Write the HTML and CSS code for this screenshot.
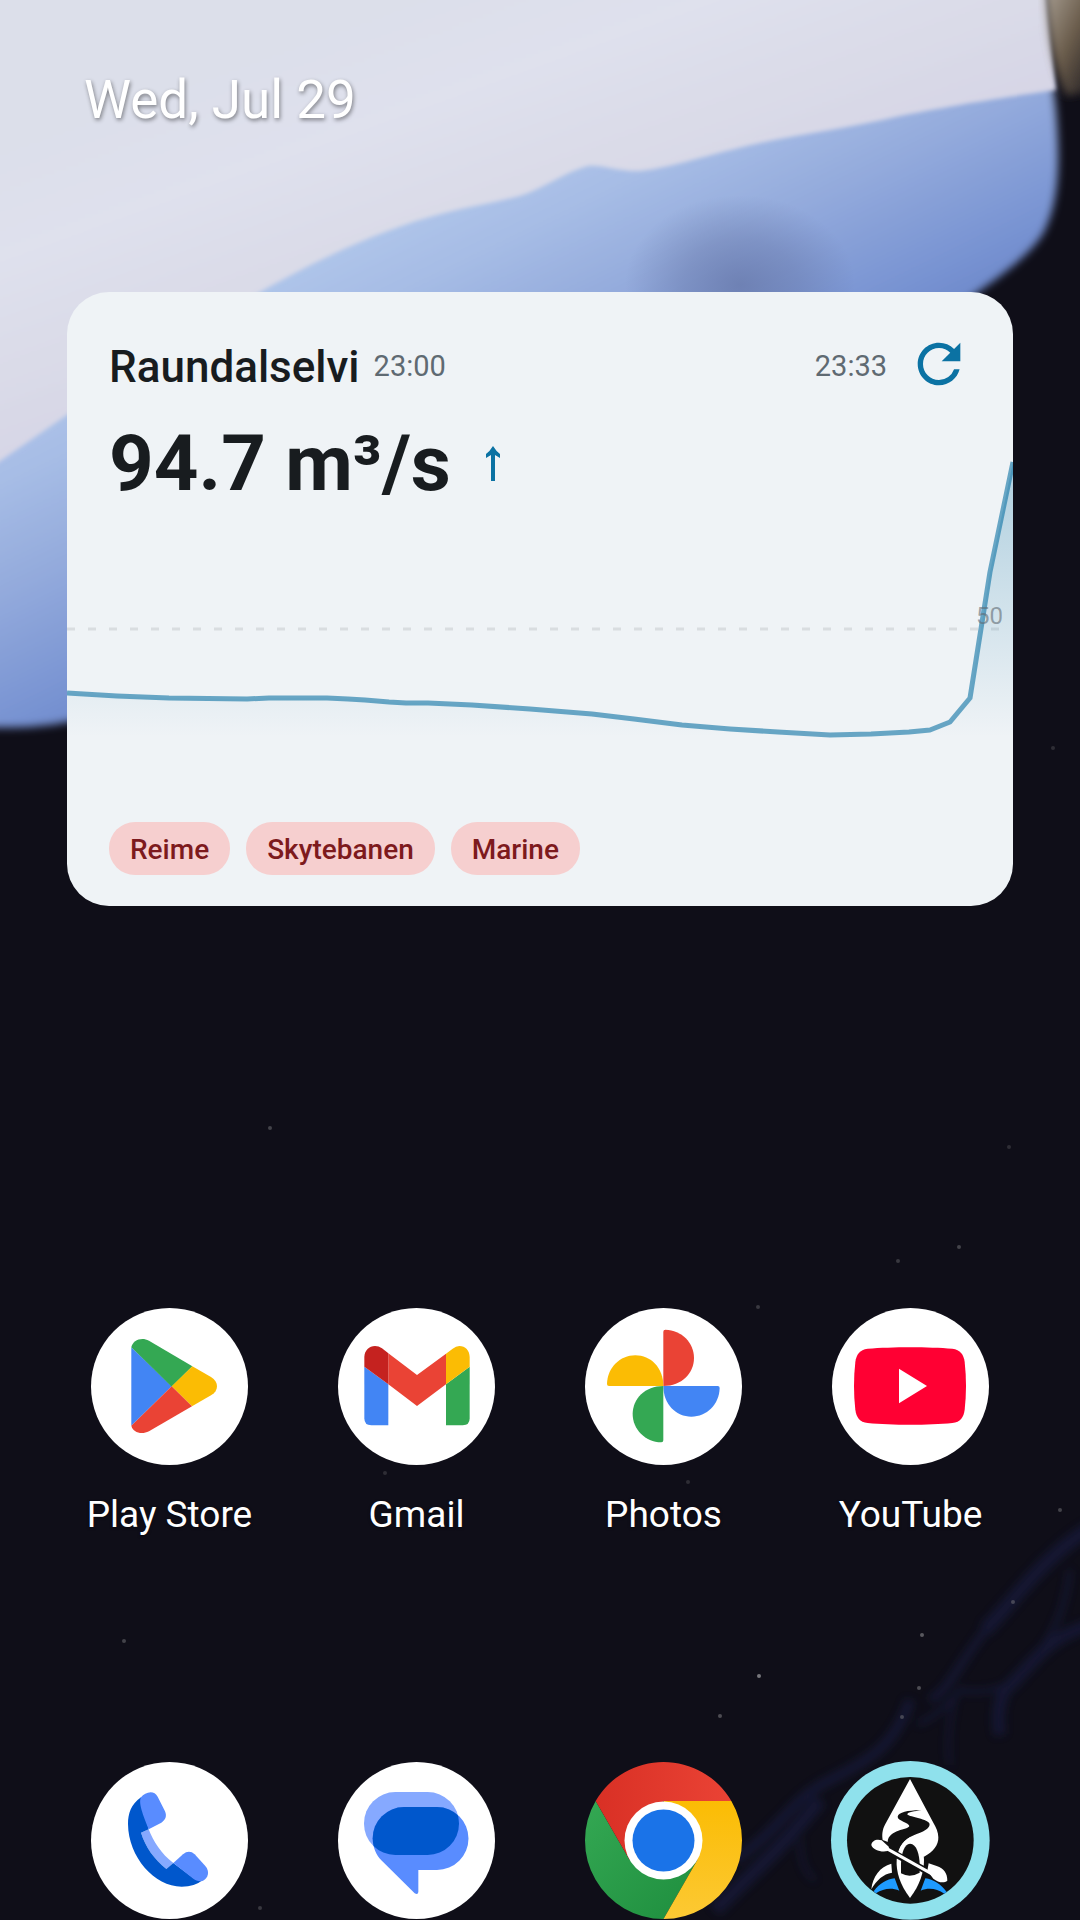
FILE: index.html
```
<!DOCTYPE html>
<html lang="en">
<head>
  <meta charset="UTF-8">
  <meta name="viewport" content="width=device-width, initial-scale=1.0">
  <title>Home screen</title>
  <link rel="stylesheet" href="styles.css">
</head>
<body>
  <!-- Wallpaper -->
  <svg class="wallpaper" viewBox="0 0 1080 1920" preserveAspectRatio="xMidYMid slice" aria-hidden="true">
    <defs>
      <linearGradient id="haze" gradientUnits="userSpaceOnUse" x1="400" y1="0" x2="520" y2="330">
        <stop offset="0" stop-color="#dcdfea"/>
        <stop offset="0.3" stop-color="#dfe1ed"/>
        <stop offset="0.6" stop-color="#dadbe8"/>
        <stop offset="1" stop-color="#d5d3e5"/>
      </linearGradient>
      <linearGradient id="wing" gradientUnits="userSpaceOnUse" x1="350" y1="230" x2="520" y2="580">
        <stop offset="0" stop-color="#b0c6ea"/>
        <stop offset="0.2" stop-color="#a6bce5"/>
        <stop offset="0.45" stop-color="#93aadc"/>
        <stop offset="0.75" stop-color="#7893d2"/>
        <stop offset="1" stop-color="#627dc2"/>
      </linearGradient>
      <radialGradient id="smudge">
        <stop offset="0" stop-color="#5d6c9c" stop-opacity="0.6"/>
        <stop offset="0.5" stop-color="#5d6c9c" stop-opacity="0.35"/>
        <stop offset="1" stop-color="#5d6c9c" stop-opacity="0"/>
      </radialGradient>
      <linearGradient id="sand" x1="0" y1="0" x2="1" y2="1">
        <stop offset="0" stop-color="#b0a79c"/>
        <stop offset="0.5" stop-color="#6a5c4b"/>
        <stop offset="1" stop-color="#14121a"/>
      </linearGradient>
      <filter id="soft" x="-10%" y="-10%" width="120%" height="120%"><feGaussianBlur stdDeviation="4"/></filter>
      <filter id="edge" x="-10%" y="-10%" width="120%" height="120%"><feGaussianBlur stdDeviation="2"/></filter>
    </defs>
    <rect width="1080" height="1920" fill="#0f0e18"/>
    <path filter="url(#soft)" fill="url(#wing)" d="M-20 -20H1046C1044 30 1052 70 1056 110C1060 160 1060 200 1044 232C1030 256 1000 276 970 298C700 500 300 700 67 722C40 728 10 728 -20 727Z"/>
    <path filter="url(#edge)" fill="url(#haze)" d="M-20 -20H1044L1056 90C1000 98 960 104 900 116C850 128 800 134 760 143C710 154 670 168 640 171C620 172 600 164 588 166C565 172 545 188 520 196C490 204 460 208 430 217C370 234 310 264 262 291L67 415L-20 475Z"/>
    <ellipse cx="740" cy="285" rx="115" ry="90" fill="url(#smudge)"/>
    <path filter="url(#soft)" fill="url(#sand)" d="M1044 -20H1100V90L1066 96Q1048 60 1044 -20Z"/>
    <!-- nebula -->
    <g filter="url(#soft)" fill="none" stroke="#1a2252" opacity="0.45">
      <path stroke-width="14" d="M1090 1528C1040 1560 1015 1600 985 1630"/>
      <path stroke-width="8" d="M990 1625C960 1660 950 1690 930 1700"/>
      <path stroke-width="12" d="M1090 1625C1040 1640 1030 1670 1005 1690Q995 1710 1000 1735"/>
      <path stroke-width="5" d="M1010 1684Q985 1695 960 1690Q940 1715 918 1724"/>
      <path stroke-width="5" d="M1070 1570Q1064 1620 1040 1650"/>
      <path stroke-width="10" d="M910 1700C895 1745 870 1760 830 1780S780 1830 735 1860"/>
      <path stroke-width="14" d="M820 1800C780 1850 755 1870 715 1910"/>
      <path stroke-width="4" d="M955 1695Q945 1740 950 1765M800 1840Q800 1870 815 1880"/>
    </g>
    <!-- stars -->
    <g fill="#77777c">
      <circle cx="270" cy="1128" r="2" opacity="0.5"/>
      <circle cx="759" cy="1676" r="2"/>
      <circle cx="720" cy="1716" r="2" opacity="0.6"/>
      <circle cx="922" cy="1635" r="2" opacity="0.7"/>
      <circle cx="919" cy="1688" r="2" opacity="0.6"/>
      <circle cx="902" cy="1717" r="2" opacity="0.5"/>
      <circle cx="1013" cy="1602" r="2" opacity="0.5"/>
      <circle cx="1060" cy="1510" r="2" opacity="0.5"/>
      <circle cx="959" cy="1247" r="2" opacity="0.5"/>
      <circle cx="898" cy="1261" r="2" opacity="0.4"/>
      <circle cx="758" cy="1307" r="2" opacity="0.4"/>
      <circle cx="124" cy="1641" r="2" opacity="0.5"/>
      <circle cx="385" cy="1473" r="2" opacity="0.3"/>
      <circle cx="688" cy="1482" r="2" opacity="0.3"/>
      <circle cx="260" cy="1908" r="2" opacity="0.4"/>
      <circle cx="1053" cy="748" r="2" opacity="0.3"/>
      <circle cx="1009" cy="1147" r="2" opacity="0.3"/>
    </g>
  </svg>

  <main class="home">
    <time class="date">Wed, Jul 29</time>

    <section class="widget">
      <div class="chart">
        <svg viewBox="0 0 946 614" preserveAspectRatio="none" aria-hidden="true">
          <defs>
            <linearGradient id="area" gradientUnits="userSpaceOnUse" x1="0" y1="170" x2="0" y2="445">
              <stop offset="0" stop-color="#0b72a3" stop-opacity="0.28"/>
              <stop offset="0.5" stop-color="#0b72a3" stop-opacity="0.14"/>
              <stop offset="1" stop-color="#0b72a3" stop-opacity="0"/>
            </linearGradient>
          </defs>
          <path class="grid-line" d="M0 337H934"/>
          <path fill="url(#area)" d="M0 401L50 404L102 406L180 407L202 406H260L281 407L298 408L322 410L339 411H361L405 413L463 417L525 422L567 427L615 433L663 437L711 440L763 443L804 442L842 440L863 438L883 430L903 406L923 280L946 170V445H0Z"/>
          <path class="flow-line" d="M0 401L50 404L102 406L180 407L202 406H260L281 407L298 408L322 410L339 411H361L405 413L463 417L525 422L567 427L615 433L663 437L711 440L763 443L804 442L842 440L863 438L883 430L903 406L923 280L946 170"/>
        </svg>
        <span class="grid-label">50</span>
      </div>

      <header class="widget-header">
        <h1>Raundalselvi</h1>
        <time>23:00</time>
        <time class="updated">23:33</time>
        <button class="refresh" type="button" aria-label="Refresh">
          <svg viewBox="0 0 24 24"><path d="M17.65 6.35A7.958 7.958 0 0 0 12 4c-4.42 0-7.99 3.58-7.99 8s3.57 8 7.99 8c3.73 0 6.84-2.55 7.73-6h-2.08A5.99 5.99 0 0 1 12 18c-3.31 0-6-2.69-6-6s2.69-6 6-6c1.66 0 3.14.69 4.22 1.78L13 11h7V4l-2.35 2.35z"/></svg>
        </button>
      </header>

      <p class="reading">
        <span>94.7 m³/s</span>
        <svg class="trend" viewBox="0 0 16 36" role="img" aria-label="Rising"><path d="M8 0Q11 5 15 8V12L10 9V35H6V9L1 12V8Q5 5 8 0Z"/></svg>
      </p>

      <ul class="sections">
        <li>Reime</li>
        <li>Skytebanen</li>
        <li>Marine</li>
      </ul>
    </section>

    <nav class="apps">
      <a href="#">
        <svg viewBox="0 0 471 471" aria-hidden="true">
          <circle cx="235.5" cy="235.5" r="235.5" fill="#fff"/>
          <path fill="#4285f4" d="M121 118L242 235L121 353Z"/>
          <path fill="#34a853" d="M121 118C125 98 150 86 174 98L304 175L242 236Z"/>
          <path fill="#fbbc04" d="M304 175L360 207C384 222 384 248 360 262L303 295L242 235Z"/>
          <path fill="#ea4335" d="M121 353C125 372 150 382 174 370L303 295L242 235Z"/>
        </svg>
        <span>Play Store</span>
      </a>
      <a href="#">
        <svg viewBox="0 0 471 471" aria-hidden="true">
          <circle cx="235.5" cy="235.5" r="235.5" fill="#fff"/>
          <path fill="#4285f4" d="M79 176L151 229V352H100Q79 352 79 331Z"/>
          <path fill="#34a853" d="M395 176L324 229V352H374Q395 352 395 331Z"/>
          <path fill="#ea4335" d="M151 136L237 201L324 137V229L237 294L151 229Z"/>
          <path fill="#c5221f" d="M79 176V147C79 128 94 114 111 114Q122 114 132 121L151 136V229Z"/>
          <path fill="#fbbc04" d="M324 137L344 122Q354 114 364 114C382 114 395 128 395 147V176L324 229Z"/>
        </svg>
        <span>Gmail</span>
      </a>
      <a href="#">
        <svg viewBox="0 0 471 471" aria-hidden="true">
          <defs><path id="petal" d="M235 234V71Q235 65 241 65C290 66 327 104 327 150C327 196 290 234 235 234Z"/></defs>
          <circle cx="235.5" cy="235.5" r="235.5" fill="#fff"/>
          <use href="#petal" fill="#ea4335"/>
          <use href="#petal" fill="#4285f4" transform="rotate(90 235 234)"/>
          <use href="#petal" fill="#34a853" transform="rotate(180 235 234)"/>
          <use href="#petal" fill="#fbbc04" transform="rotate(270 235 234)"/>
        </svg>
        <span>Photos</span>
      </a>
      <a href="#">
        <svg viewBox="0 0 471 471" aria-hidden="true">
          <circle cx="235.5" cy="235.5" r="235.5" fill="#fff"/>
          <path fill="#f03" d="M107 122C180 116 290 116 361 122C385 125 395 139 398 162Q406 234 398 305C395 328 385 342 361 345C290 352 180 352 107 345C83 342 73 328 70 305Q62 234 70 162C73 139 83 125 107 122Z"/>
          <path fill="#fff" d="M201 182L285 234L201 286Z"/>
        </svg>
        <span>YouTube</span>
      </a>
    </nav>

    <nav class="dock">
      <a href="#" aria-label="Phone">
        <svg viewBox="0 0 471 471">
          <circle cx="235.5" cy="235.5" r="235.5" fill="#fff"/>
          <path fill="#86a9ff" d="M150 212L173 202C187 238 210 275 247 303L226 321C190 292 163 255 150 212Z"/>
          <path fill="#0057cc" d="M150 106C120 127 111 155 111 186C112 285 190 374 272 374Q312 374 335 354L307 348L247 303L226 321C190 292 163 255 150 212L173 202Z"/>
          <path fill="#598cff" d="M150 106C162 90 189 82 200 104L222 148C228 162 224 174 211 182L173 202C162 172 140 125 150 106Z"/>
          <path fill="#598cff" d="M247 303L276 277C288 267 300 267 311 277L343 312C357 328 352 348 336 356C325 360 315 356 307 350Z"/>
        </svg>
      </a>
      <a href="#" aria-label="Messages">
        <svg viewBox="0 0 471 471">
          <defs><clipPath id="bubble"><rect x="78" y="90" width="285" height="189" rx="94"/></clipPath></defs>
          <circle cx="235.5" cy="235.5" r="235.5" fill="#fff"/>
          <rect x="78" y="90" width="285" height="189" rx="94" fill="#86a9ff"/>
          <path fill="#598cff" d="M198 135H297A94 94 0 0 1 297 324H241V390Q240 400 230 394L130 295C115 280 104 256 104 229A94 94 0 0 1 198 135Z"/>
          <path fill="#0057cc" clip-path="url(#bubble)" d="M198 135H297A94 94 0 0 1 297 324H160L130 295C115 280 104 256 104 229A94 94 0 0 1 198 135Z"/>
        </svg>
      </a>
      <a href="#" aria-label="Chrome">
        <svg viewBox="0 0 471 471">
          <defs>
            <linearGradient id="red"><stop offset="0" stop-color="#d93025"/><stop offset="1" stop-color="#ea4335"/></linearGradient>
            <linearGradient id="green" x1="1" y1="1" x2="0" y2="0"><stop offset="0" stop-color="#1e8e3e"/><stop offset="1" stop-color="#34a853"/></linearGradient>
            <linearGradient id="yellow" x1="0" y1="1" x2="0" y2="0"><stop offset="0" stop-color="#fcc934"/><stop offset="1" stop-color="#fbbc04"/></linearGradient>
          </defs>
          <path fill="url(#green)" d="M32 117L134 294L337 294L235.500 471A235.500 235.500 0 0 1 32 117Z"/>
          <path fill="url(#yellow)" d="M439 117H235L337 294L235.500 471A235.500 235.500 0 0 0 439 117Z"/>
          <path fill="url(#red)" d="M32 117A235.500 235.500 0 0 1 439 117H235L134 294Z"/>
          <circle cx="235.5" cy="235.5" r="117" fill="#fff"/>
          <circle cx="235.5" cy="235.5" r="93" fill="#1a73e8"/>
        </svg>
      </a>
      <a href="#" aria-label="Kayak">
        <svg viewBox="36 36 471 471">
          <circle cx="271" cy="271" r="238" fill="#8fe1ec"/>
          <circle cx="271" cy="271" r="190" fill="#111"/>
          <path fill="#fff" d="M270 87L196 222C186 240 186 255 188 270L204 276L236 306L312 320C340 306 356 285 355 262C355 245 348 232 340 218Z"/>
          <path fill="#111" d="M305 181C270 180 235 186 233 200C232 212 268 218 268 228C265 240 205 238 203 276L205 290L234 310C240 280 262 262 290 252C320 243 332 230 328 220C318 205 262 200 262 193C262 186 285 184 305 181Z"/>
          <path fill="#fff" d="M270 444C240 405 228 365 230 330C234 302 245 275 270 262C295 275 312 300 312 330C312 365 300 405 270 444Z"/>
          <path fill="#111" d="M270 281C290 281 299 315 299 345V368Q270 385 243 370V340C244 312 253 281 270 281Z"/>
          <path stroke="#111" stroke-width="20" d="M218 308L340 374"/>
          <path stroke="#fff" stroke-width="9" d="M195 293L345 377"/>
          <path fill="#fff" d="M154 285C155 272 170 266 185 271L207 291L203 303C185 308 158 300 154 285Z"/>
          <path fill="#fff" d="M326 340L350 348C372 355 382 370 382 392C372 400 355 398 340 386L322 362Z"/>
          <path fill="#fff" d="M214 341L216 368C190 372 170 390 154 418C158 380 180 350 214 341Z"/>
          <path fill="#1e9bff" d="M224 385L238 422C215 412 190 415 168 430L161 424C178 400 200 388 224 385ZM316 385L302 422C325 412 350 415 373 431L380 426C362 402 340 388 316 385Z"/>
        </svg>
      </a>
    </nav>
  </main>
</body>
</html>
```
FILE: styles.css
```
* {
  box-sizing: border-box;
}
body {
  margin: 0;
  background-color: #0f0e18;
  font-family: Roboto, sans-serif;
}
h1, p, ul {
  margin: 0;
  padding: 0;
}
.wallpaper {
  position: absolute;
  top: 0;
  left: 0;
  width: 100%;
  height: 100%;
  z-index: -1;
}
.home {
  display: flex;
  flex-direction: column;
  min-height: 100vh;
  padding: 68px 46px 1px;
}
.date {
  padding-left: 38px;
  font-size: 53px;
  line-height: 64px;
  color: #fff;
  text-shadow: 1px 2px 4px rgba(0, 0, 0, 0.45);
}

/* River flow widget */
.widget {
  position: relative;
  display: flex;
  flex-direction: column;
  min-height: 614px;
  margin: 160px 21px 0;
  padding: 40px 42px 31px;
  border-radius: 42px;
  background-color: #eff3f6;
  color: #181c1f;
  overflow: hidden;
}
.chart {
  position: absolute;
  inset: 0;
}
.chart svg {
  display: block;
  width: 100%;
  height: 100%;
}
.grid-line {
  fill: none;
  stroke: #d9dde0;
  stroke-width: 3;
  stroke-dasharray: 8 13;
}
.flow-line {
  fill: none;
  stroke: #0b72a3;
  stroke-width: 5;
  stroke-opacity: 0.6;
  stroke-linejoin: round;
}
.grid-label {
  position: absolute;
  top: 310px;
  right: 10px;
  font-size: 24px;
  line-height: 28px;
  color: rgba(95, 106, 114, 0.6);
}
.widget-header {
  position: relative;
  display: flex;
  align-items: center;
  height: 64px;
}
.widget-header h1 {
  padding-top: 6px;
  font-size: 44px;
  font-weight: 500;
  line-height: 52px;
}
.widget-header time {
  margin-left: 14px;
  padding-top: 4px;
  font-size: 29px;
  line-height: 34px;
  color: #5f6a72;
}
.widget-header .updated {
  margin-left: auto;
}
.refresh {
  width: 64px;
  height: 64px;
  margin-left: 20px;
  padding: 0;
  border: 0;
  background: none;
  cursor: pointer;
}
.refresh svg {
  display: block;
  fill: #0b72a3;
}
.reading {
  position: relative;
  display: flex;
  align-items: center;
  gap: 34px;
  margin-top: 22px;
  font-size: 78px;
  font-weight: 700;
  line-height: 92px;
}
.trend {
  width: 16px;
  height: 36px;
  fill: #0b72a3;
}
.sections {
  position: relative;
  display: flex;
  gap: 16px;
  margin-top: auto;
  list-style: none;
}
.sections li {
  padding: 3px 21px 0;
  border-radius: 26px;
  background-color: #f6cfcf;
  color: #7d1a1d;
  font-size: 28px;
  font-weight: 500;
  line-height: 50px;
}

/* App icons */
.apps, .dock {
  display: grid;
  grid-template-columns: repeat(4, 1fr);
}
.apps {
  margin-top: auto;
  margin-bottom: 225px;
}
.apps a, .dock a {
  display: flex;
  flex-direction: column;
  align-items: center;
  gap: 28px;
  color: #fff;
  font-size: 37px;
  line-height: 44px;
  text-decoration: none;
  text-shadow: 0 1px 3px rgba(0, 0, 0, 0.5);
}
.apps svg, .dock svg {
  width: 157px;
  height: 157px;
  overflow: visible;
}
```
